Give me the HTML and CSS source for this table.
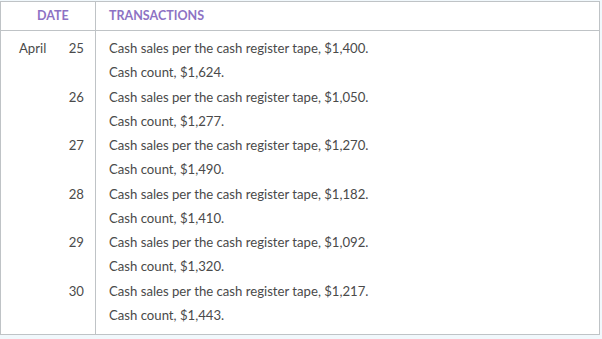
FILE: index.html
```html
<!DOCTYPE html>
<html>
<head>
<meta charset="utf-8">
<link rel="stylesheet" href="styles.css">
</head>
<body>
<div class="table">
  <div class="head date-h">DATE</div>
  <div class="head tx-h">TRANSACTIONS</div>
  <div class="date-col">
    <div class="d"><span>April</span><span>25</span></div><div class="d"></div>
    <div class="d"><span></span><span>26</span></div><div class="d"></div>
    <div class="d"><span></span><span>27</span></div><div class="d"></div>
    <div class="d"><span></span><span>28</span></div><div class="d"></div>
    <div class="d"><span></span><span>29</span></div><div class="d"></div>
    <div class="d"><span></span><span>30</span></div><div class="d"></div>
  </div>
  <div class="tx-col">
    <div>Cash sales per the cash register tape, $1,400.</div>
    <div>Cash count, $1,624.</div>
    <div>Cash sales per the cash register tape, $1,050.</div>
    <div>Cash count, $1,277.</div>
    <div>Cash sales per the cash register tape, $1,270.</div>
    <div>Cash count, $1,490.</div>
    <div>Cash sales per the cash register tape, $1,182.</div>
    <div>Cash count, $1,410.</div>
    <div>Cash sales per the cash register tape, $1,092.</div>
    <div>Cash count, $1,320.</div>
    <div>Cash sales per the cash register tape, $1,217.</div>
    <div>Cash count, $1,443.</div>
  </div>
</div>
</body>
</html>
```
FILE: styles.css
```css
html, body {
  margin: 0;
  padding: 0;
  background: #f1f8fc;
}
body {
  font-family: Lato, "Open Sans", sans-serif;
  color: #4a4a4a;
  font-size: 13.15px;
}
.table {
  margin-top: 1px;
  width: 598px;
  background: #fff;
  border: 1px solid #bfc3c6;
  display: grid;
  grid-template-columns: 95px 1fr;
}
.head {
  height: 28px;
  line-height: 28px;
  border-bottom: 1px solid #bfc3c6;
  color: #8d72c4;
  font-weight: 700;
  font-size: 12.5px;
}
.date-h {
  border-right: 1px solid #bfc3c6;
  padding-left: 36px;
}
.tx-h {
  padding-left: 13px;
}
.date-col {
  border-right: 1px solid #bfc3c6;
  padding: 5px 11px 7px 18px;
}
.d {
  height: 24.27px;
  line-height: 24.27px;
  display: flex;
  justify-content: space-between;
}
.tx-col {
  padding: 5px 0 7px 13px;
}
.tx-col div {
  height: 24.27px;
  line-height: 24.27px;
}
```
